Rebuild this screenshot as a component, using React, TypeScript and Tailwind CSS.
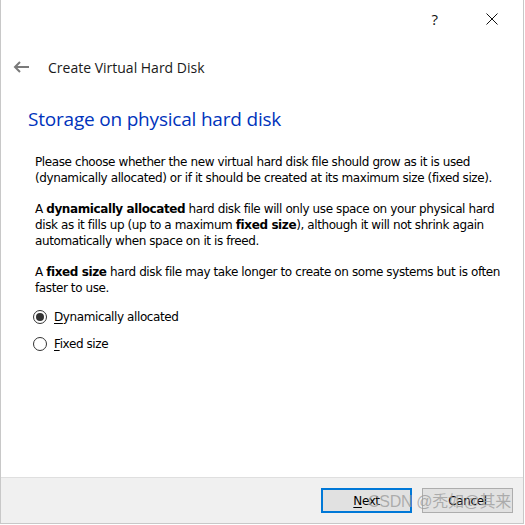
import { useState } from "react";

const body = { fontFamily: "'DejaVu Sans', Tahoma, sans-serif" };
const segoe = { fontFamily: "'Open Sans', 'Noto Sans', sans-serif" };

function Radio({
  checked,
  onClick,
  accel,
  rest,
}: {
  checked: boolean;
  onClick: () => void;
  accel: string;
  rest: string;
}) {
  return (
    <button
      type="button"
      onClick={onClick}
      className="flex items-center gap-[7px] h-[18px] text-left"
    >
      <span className="w-[14px] h-[14px] rounded-full border border-[#333] bg-white flex items-center justify-center">
        {checked && <span className="w-[8px] h-[8px] rounded-full bg-[#333]" />}
      </span>
      <span className="text-[12px] text-black tracking-[-0.4px]" style={body}>
        <span className="underline underline-offset-2">{accel}</span>
        {rest}
      </span>
    </button>
  );
}

export default function App() {
  const [mode, setMode] = useState<"dynamic" | "fixed">("dynamic");

  return (
    <div className="w-[525px] h-[525px] bg-white overflow-hidden relative">
      <div className="w-[524px] h-[524px] border border-[#c8c8c8] border-t-0 flex flex-col">
        {/* title bar */}
        <div className="h-[38px] flex items-center justify-end">
          <span className="text-[15px] text-[#111] mr-[48px]" style={segoe}>
            ?
          </span>
          <svg width="12" height="12" viewBox="0 0 12 12" className="mr-[25px]">
            <path d="M0.5 0.5 L11.5 11.5 M11.5 0.5 L0.5 11.5" stroke="#111" strokeWidth="1" />
          </svg>
        </div>

        {/* header */}
        <div className="h-[58px] flex items-center pl-[12px]">
          <svg width="17" height="12" viewBox="0 0 17 12">
            <path d="M16 6 H2 M7 1 L2 6 L7 11" stroke="#7a7a7a" strokeWidth="2" fill="none" />
          </svg>
          <span className="ml-[18px] text-[14px] text-[#1a1a1a]" style={segoe}>
            Create Virtual Hard Disk
          </span>
        </div>

        <div className="pl-[27px] pt-[9px]">
          <h1 className="text-[19px] leading-[28px] text-[#0033bc] tracking-[-0.2px]" style={segoe}>
            Storage on physical hard disk
          </h1>
        </div>

        {/* description */}
        <div
          className="pl-[34px] pr-[8px] pt-[21px] text-[12px] leading-[16px] text-black tracking-[-0.4px] flex flex-col gap-[15px]"
          style={body}
        >
          <p>
            Please choose whether the new virtual hard disk file should grow as it is used
            (dynamically allocated) or if it should be created at its maximum size (fixed size).
          </p>
          <p>
            A <b>dynamically allocated</b> hard disk file will only use space on your physical hard
            disk as it fills up (up to a maximum <b>fixed size</b>), although it will not shrink again
            automatically when space on it is freed.
          </p>
          <p>
            A <b>fixed size</b> hard disk file may take longer to create on some systems but is often
            faster to use.
          </p>
        </div>

        <div className="pl-[32px] pt-[12px] flex flex-col gap-[9px]">
          <Radio
            checked={mode === "dynamic"}
            onClick={() => setMode("dynamic")}
            accel="D"
            rest="ynamically allocated"
          />
          <Radio
            checked={mode === "fixed"}
            onClick={() => setMode("fixed")}
            accel="F"
            rest="ixed size"
          />
        </div>

        <div className="flex-1" />

        {/* footer */}
        <div className="h-[46px] bg-[#f0f0f0] border-t border-[#dfdfdf] flex items-start justify-end gap-[10px] pt-[10px] pr-[10px]">
          <button
            type="button"
            className="w-[91px] h-[25px] bg-[#e1e1e1] border-2 border-[#0078d7] text-[12px] text-black tracking-[-0.4px]"
            style={body}
          >
            <span className="underline underline-offset-2">N</span>ext
          </button>
          <button
            type="button"
            className="w-[91px] h-[25px] bg-[#e1e1e1] border border-[#adadad] text-[12px] text-black tracking-[-0.4px]"
            style={body}
          >
            Cancel
          </button>
        </div>
      </div>

      {/* watermark */}
      <div
        className="absolute left-[368px] top-[490px] text-[16px] text-[#9a9a9a]/75 pointer-events-none whitespace-nowrap tracking-[-0.3px]"
        style={{ fontFamily: "'Liberation Sans', 'Noto Sans CJK SC', sans-serif" }}
      >
        CSDN @秃如@其来
      </div>
    </div>
  );
}
